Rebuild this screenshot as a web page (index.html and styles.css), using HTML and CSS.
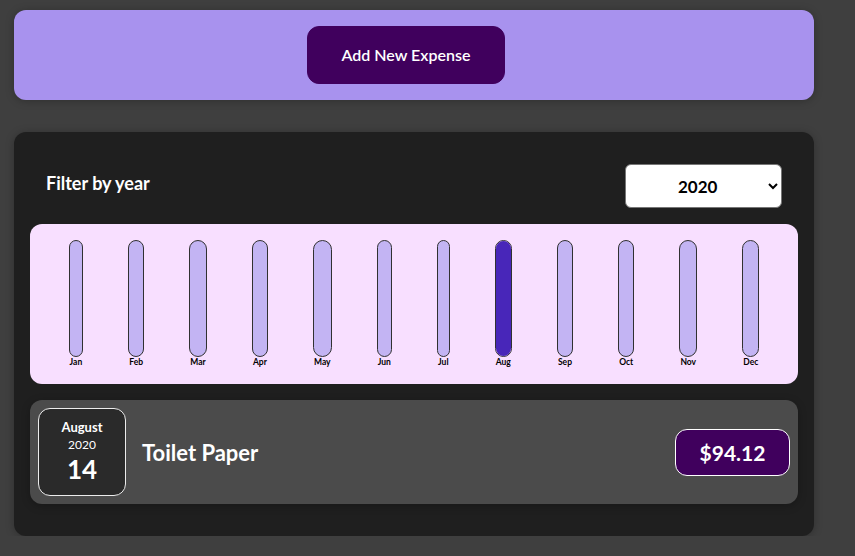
FILE: index.html
```html
<!DOCTYPE html>
<html lang="en">
<head>
<meta charset="utf-8">
<title>Expenses</title>
<link rel="stylesheet" href="styles.css">
</head>
<body>
<div class="new-expense">
  <button class="new-expense__btn" type="button">Add New Expense</button>
</div>
<div class="expenses">
  <div class="expenses-filter">
    <div class="expenses-filter__control">
      <label>Filter by year</label>
      <select class="expenses-filter__select">
        <option>2022</option>
        <option>2021</option>
        <option selected>2020</option>
        <option>2019</option>
      </select>
    </div>
  </div>
  <div class="chart">
    <div class="chart-bar"><div class="chart-bar__inner"></div><div class="chart-bar__label">Jan</div></div>
    <div class="chart-bar"><div class="chart-bar__inner"></div><div class="chart-bar__label">Feb</div></div>
    <div class="chart-bar"><div class="chart-bar__inner"></div><div class="chart-bar__label">Mar</div></div>
    <div class="chart-bar"><div class="chart-bar__inner"></div><div class="chart-bar__label">Apr</div></div>
    <div class="chart-bar"><div class="chart-bar__inner"></div><div class="chart-bar__label">May</div></div>
    <div class="chart-bar"><div class="chart-bar__inner"></div><div class="chart-bar__label">Jun</div></div>
    <div class="chart-bar"><div class="chart-bar__inner"></div><div class="chart-bar__label">Jul</div></div>
    <div class="chart-bar"><div class="chart-bar__inner"><div class="chart-bar__fill" style="height:100%"></div></div><div class="chart-bar__label">Aug</div></div>
    <div class="chart-bar"><div class="chart-bar__inner"></div><div class="chart-bar__label">Sep</div></div>
    <div class="chart-bar"><div class="chart-bar__inner"></div><div class="chart-bar__label">Oct</div></div>
    <div class="chart-bar"><div class="chart-bar__inner"></div><div class="chart-bar__label">Nov</div></div>
    <div class="chart-bar"><div class="chart-bar__inner"></div><div class="chart-bar__label">Dec</div></div>
  </div>
  <div class="expense-item">
    <div class="expense-date">
      <div class="expense-date__month">August</div>
      <div class="expense-date__year">2020</div>
      <div class="expense-date__day">14</div>
    </div>
    <div class="expense-item__description">
      <h2>Toilet Paper</h2>
      <div class="expense-item__price">$94.12</div>
    </div>
  </div>
</div>
</body>
</html>
```

FILE: styles.css
```css
* { box-sizing: border-box; }

html, body {
  margin: 0;
  padding: 0;
}

body {
  background-color: #3f3f3f;
  font-family: Lato, "Noto Sans", sans-serif;
  color: #fff;
  padding-top: 10px;
}

.new-expense {
  width: 800px;
  margin: 0 0 32px 14px;
  padding: 16px;
  background-color: #a892ee;
  border-radius: 12px;
  text-align: center;
  box-shadow: 0 1px 8px rgba(0, 0, 0, 0.25);
}

.new-expense__btn {
  font-family: inherit;
  font-size: 16px;
  font-weight: 600;
  line-height: 24px;
  width: 198px;
  height: 58px;
  padding: 0;
  margin-right: 16px;
  border: 1px solid #40005d;
  background-color: #40005d;
  color: #fff;
  border-radius: 12px;
  cursor: pointer;
}

.expenses {
  width: 800px;
  margin: 0 0 0 14px;
  padding: 16px;
  background-color: #1f1f1f;
  border-radius: 12px;
  box-shadow: 0 1px 8px rgba(0, 0, 0, 0.25);
}

.expenses-filter {
  padding: 0 16px;
}

.expenses-filter__control {
  display: flex;
  align-items: center;
  justify-content: space-between;
  margin: 16px 0;
}

.expenses-filter__control label {
  font-weight: bold;
  font-size: 18px;
  color: #fff;
  margin-bottom: 7px;
}

.expenses-filter__select {
  font-family: inherit;
  font-weight: bold;
  font-size: 17px;
  width: 157px;
  height: 44px;
  padding: 0 8px 0 48px;
  border-radius: 6px;
  border: 1px solid #767676;
  background-color: #fff;
  color: #000;
}

.chart {
  display: flex;
  justify-content: space-around;
  height: 160px;
  padding: 16px;
  background-color: #f8dfff;
  border-radius: 12px;
  text-align: center;
}

.chart-bar {
  height: 100%;
  display: flex;
  flex-direction: column;
  align-items: center;
}

.chart-bar__inner {
  flex: 1;
  width: 100%;
  border: 1px solid #313131;
  border-radius: 12px;
  background-color: #c3b4f3;
  overflow: hidden;
  display: flex;
  flex-direction: column;
  justify-content: flex-end;
}

.chart-bar__fill {
  background-color: #4826b9;
  width: 100%;
}

.chart-bar__label {
  font-weight: bold;
  font-size: 8.5px;
  line-height: 11px;
  color: #000;
  padding: 0 1px;
}

.expense-item {
  display: flex;
  align-items: center;
  margin: 16px 0;
  padding: 8px;
  background-color: #4b4b4b;
  border-radius: 12px;
  box-shadow: 0 2px 8px rgba(0, 0, 0, 0.25);
}

.expense-date {
  display: flex;
  flex-direction: column;
  align-items: center;
  justify-content: center;
  width: 88px;
  height: 88px;
  border: 1px solid #ececec;
  background-color: #2a2a2a;
  color: #fff;
  border-radius: 12px;
}

.expense-date__month {
  font-size: 13px;
  font-weight: bold;
  line-height: 17px;
}

.expense-date__year {
  font-size: 12px;
  line-height: 17px;
}

.expense-date__day {
  font-size: 26px;
  font-weight: bold;
  line-height: 32px;
}

.expense-item__description {
  flex: 1;
  display: flex;
  align-items: center;
  justify-content: space-between;
}

.expense-item__description h2 {
  margin: 0 16px;
  font-size: 22px;
  font-weight: bold;
  color: #fff;
}

.expense-item__price {
  width: 115px;
  height: 47px;
  display: flex;
  align-items: center;
  justify-content: center;
  font-size: 21px;
  font-weight: bold;
  color: #fff;
  background-color: #40005d;
  border: 1px solid #fff;
  border-radius: 12px;
}
```
